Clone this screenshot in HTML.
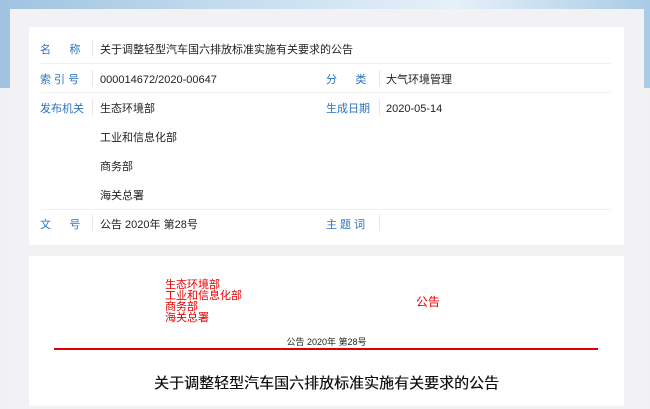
<!DOCTYPE html>
<html><head><meta charset="utf-8"><style>
*{margin:0;padding:0;box-sizing:border-box}
body{width:650px;height:401px;overflow:hidden;background:#f1f1f3;font-family:"Liberation Sans","Noto Sans CJK SC",sans-serif;position:relative}
.sky{position:absolute;left:0;top:0;width:650px;height:88px;background:linear-gradient(90deg,#9fc3e0,#c9dff0 40%,#e6f0f8 70%,#a8cbe6)}
.outer{position:absolute;left:10px;top:9px;width:634px;height:400px;background:#f2f2f4}
.card{position:absolute;background:#fff;left:29px;width:595px}
.lab{position:absolute;color:#2b73c0}
.val{position:absolute;color:#222}
.div{position:absolute;width:1px;height:16px;background:#e6e6e6}
.hl{position:absolute;left:12px;width:570px;height:1px;background:#f0f0f0}
.red{position:absolute;color:#e60000;font-size:11px;line-height:11px}
</style></head><body>
<div class="sky"></div>
<div class="outer"></div>
<div class="card" style="top:27px;height:218px">
 <div class="lab" style="left:11px;top:14px;font-size:11px">名&nbsp;&nbsp;&nbsp;&nbsp;&nbsp;&nbsp;称</div>
 <div class="div" style="left:63px;top:13px"></div>
 <div class="val" style="left:71px;top:14px;font-size:11px">关于调整轻型汽车国六排放标准实施有关要求的公告</div>
 <div class="hl" style="top:36px"></div>
 <div class="lab" style="left:11px;top:44px;font-size:11px">索 引 号</div>
 <div class="div" style="left:63px;top:43px"></div>
 <div class="val" style="left:71px;top:47px;font-size:11px">000014672/2020-00647</div>
 <div class="lab" style="left:297px;top:44px;font-size:11px">分&nbsp;&nbsp;&nbsp;&nbsp;&nbsp;&nbsp;类</div>
 <div class="div" style="left:350px;top:43px"></div>
 <div class="val" style="left:357px;top:44px;font-size:11px">大气环境管理</div>
 <div class="hl" style="top:65px"></div>
 <div class="lab" style="left:11px;top:73px;font-size:11px">发布机关</div>
 <div class="div" style="left:63px;top:72px"></div>
 <div class="val" style="left:71px;top:73px;font-size:11px">生态环境部</div>
 <div class="lab" style="left:297px;top:73px;font-size:11px">生成日期</div>
 <div class="div" style="left:350px;top:72px"></div>
 <div class="val" style="left:357px;top:76px;font-size:11px">2020-05-14</div>
 <div class="val" style="left:71px;top:102px;font-size:11px">工业和信息化部</div>
 <div class="val" style="left:71px;top:131px;font-size:11px">商务部</div>
 <div class="val" style="left:71px;top:160px;font-size:11px">海关总署</div>
 <div class="hl" style="top:182px"></div>
 <div class="lab" style="left:11px;top:189px;font-size:11px">文&nbsp;&nbsp;&nbsp;&nbsp;&nbsp;&nbsp;号</div>
 <div class="div" style="left:63px;top:188px"></div>
 <div class="val" style="left:71px;top:189px;font-size:11px">公告 2020年 第28号</div>
 <div class="lab" style="left:297px;top:189px;font-size:11px">主 题 词</div>
 <div class="div" style="left:350px;top:188px"></div>
</div>
<div class="card" style="top:256px;height:150px">
 <div class="red" style="left:136px;top:24px">生态环境部<br>工业和信息化部<br>商务部<br>海关总署</div>
 <div class="red" style="left:387px;top:41px;font-size:12px">公告</div>
 <div style="position:absolute;left:0;width:595px;top:79px;text-align:center;font-size:9px;color:#222">公告 2020年 第28号</div>
 <div style="position:absolute;left:25px;width:544px;top:92px;height:2px;background:#e00000"></div>
 <div style="position:absolute;left:0;width:595px;top:116px;text-align:center;font-size:15px;color:#111;text-shadow:0.3px 0 0 #111">关于调整轻型汽车国六排放标准实施有关要求的公告</div>
</div>
</body></html>
